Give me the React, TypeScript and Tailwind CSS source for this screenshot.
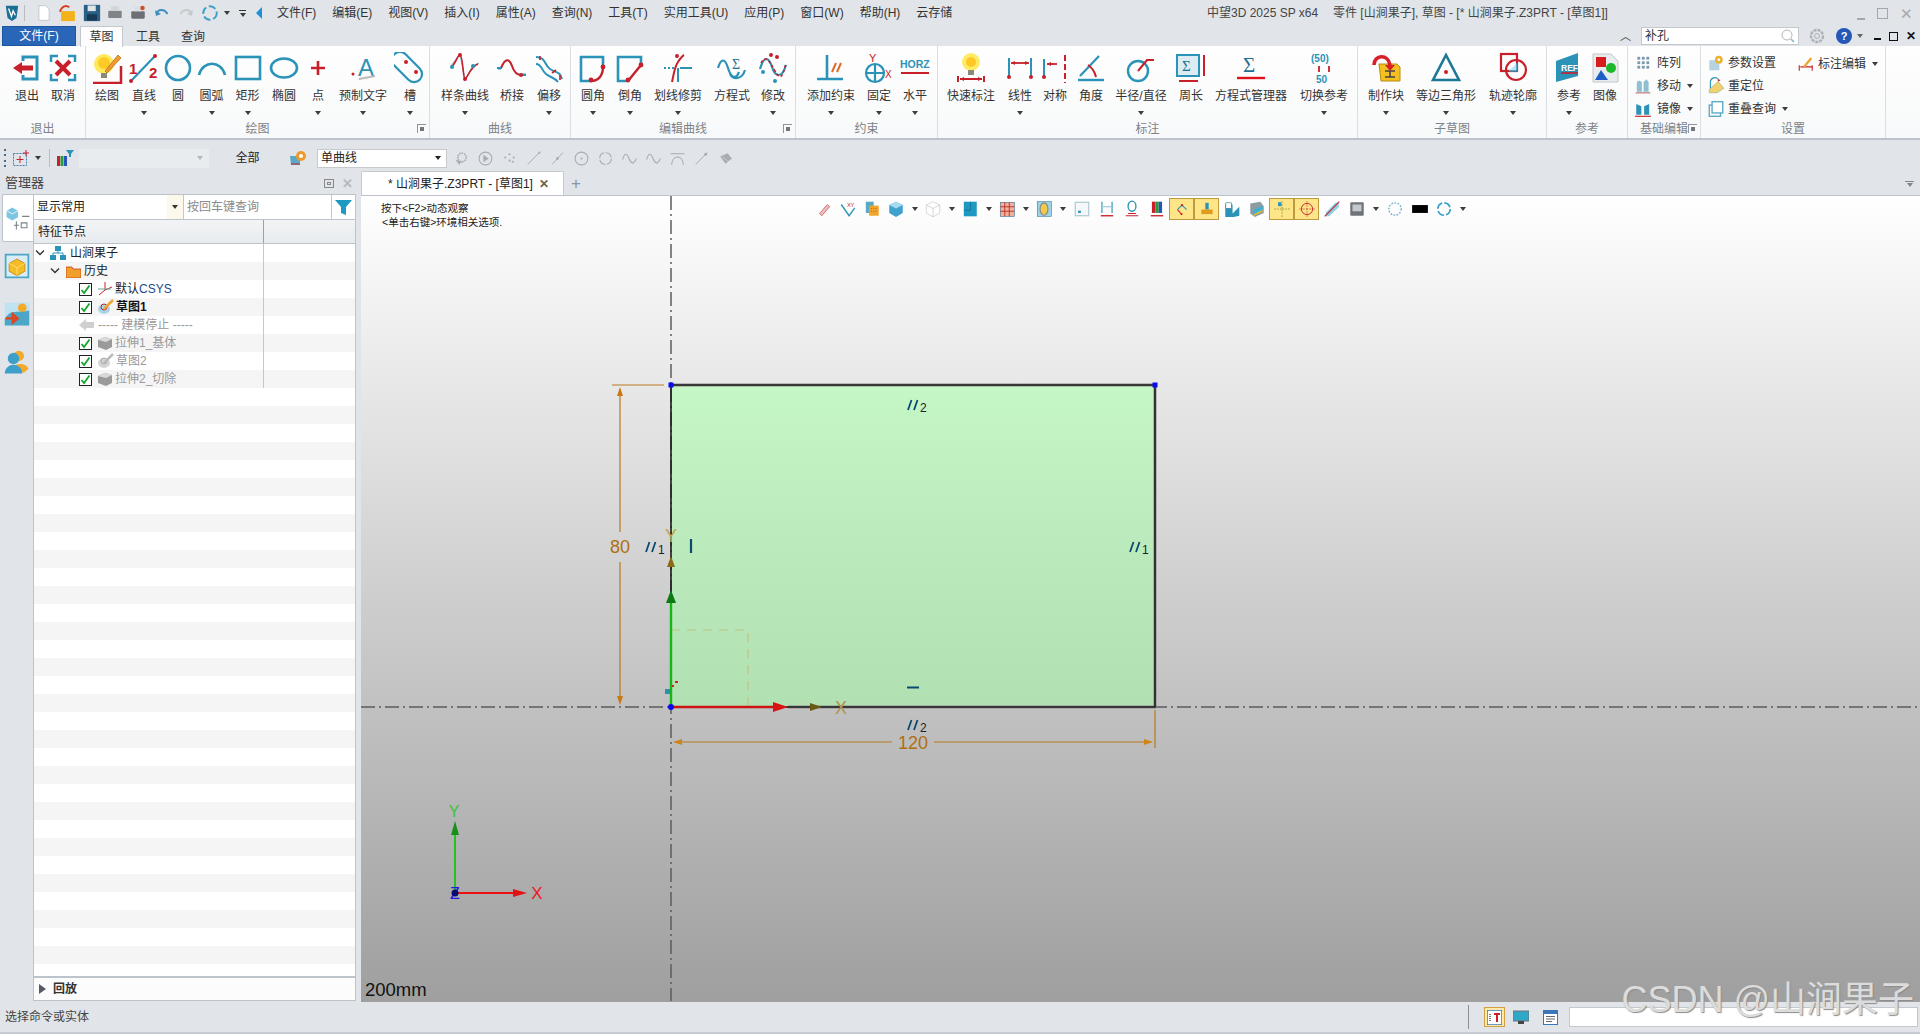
import type { ReactNode } from "react";

const T = "#2b93b8";
const R = "#c8202a";
const G = "#a9adb1";

function Svg({ size = 32, children }: { size?: number; children: ReactNode }) {
  return (
    <svg width={size} height={size} viewBox="0 0 32 32" fill="none" className="shrink-0">
      {children}
    </svg>
  );
}

const Dot = ({ x, y, c = R, r = 2 }: { x: number; y: number; c?: string; r?: number }) => <circle cx={x} cy={y} r={r} fill={c} />;

// ribbon icons, all on a 32 box
const icons: Record<string, ReactNode> = {
  exit: (<><path d="M12 9V5h14v22H12v-4" stroke={T} strokeWidth="3" /><path d="M2 16l9-6v3.5h11v5H11V22z" fill={R} /></>),
  cancel: (<><path d="M4 10V4h7M21 4h7v6M28 22v6h-7M11 28H4v-6" stroke={T} strokeWidth="2.5" /><path d="M9 9l14 14M23 9L9 23" stroke={R} strokeWidth="4" /></>),
  draw: (<><circle cx="13" cy="12" r="10" fill="#ffe95c" /><circle cx="13" cy="11" r="6" fill="#ffc928" /><rect x="10" y="21" width="6" height="5" fill="#8a8a7a" /><path d="M14 19L27 3l3 3-14 15z" fill="#ee9c2e" stroke="#a8651a" strokeWidth=".7" /><path d="M2 31h28V14" stroke={R} strokeWidth="2.5" /></>),
  line: (<><path d="M3 29L27 4" stroke={T} strokeWidth="2.2" /><Dot x={3} y={29} /><Dot x={27} y={4} /><text x="1" y="22" fontSize="15" fontWeight="700" fill={R} fontFamily="Liberation Sans">1</text><text x="21" y="26" fontSize="15" fontWeight="700" fill={R} fontFamily="Liberation Sans">2</text></>),
  circle: <circle cx="16" cy="16" r="12" stroke={T} strokeWidth="2.6" />,
  arc: <path d="M3 23C7 8 25 8 29 23" stroke={T} strokeWidth="2.6" />,
  rect: <rect x="4" y="5" width="24" height="22" stroke={T} strokeWidth="2.6" />,
  ellipse: <ellipse cx="16" cy="16" rx="13" ry="9.5" stroke={T} strokeWidth="2.6" />,
  point: <path d="M16 9v14M9 16h14" stroke={R} strokeWidth="2.6" />,
  preset: (<><text x="11" y="24" fontSize="24" fill={T} fontFamily="Liberation Sans">A</text><path d="M12 27l16-3" stroke="#bbb" strokeWidth="2" /><Dot x={6} y={22} r={1.5} /></>),
  slot: (<><rect x="-6" y="-8" width="36" height="16" rx="8" transform="translate(13 15) rotate(45) translate(-12 0)" stroke={T} strokeWidth="2.2" /><Dot x={12} y={10} r={2} /><Dot x={22} y={20} r={2} /></>),
  spline: (<><path d="M2 14L11 2l5 26 8-14 6-3" stroke="#8aaec0" strokeWidth="1.2" /><path d="M3 15C8 8 9 3 11 3c3 0 3 24 5 24s5-12 13-15" stroke={R} strokeWidth="1.6" /><Dot x={3} y={15} c={T} /><Dot x={11} y={3} /><Dot x={16} y={27} /><Dot x={24} y={14} c={T} /></>),
  bridge: (<><path d="M2 17h3C10 4 14 8 16 14s6 10 10 8h4" stroke={T} strokeWidth="1" /><path d="M5 16C10 4 14 8 16 14s5 9 9 9" stroke={R} strokeWidth="2" /><path d="M1 16h4M25 23h5" stroke={T} strokeWidth="2" /><Dot x={25} y={23} /></>),
  offset: (<><path d="M3 5c10 0 8 8 14 12s10 2 12 10" stroke={T} strokeWidth="2" /><path d="M3 12c6 0 5 6 10 10s8 3 12 8" stroke={T} strokeWidth="2" /><path d="M7 8v-4M19 21l4-3M27 28v-5" stroke={R} strokeWidth="1.6" /></>),
  fillet: (<><path d="M26 15V5H4v24h10" stroke={T} strokeWidth="2.6" /><path d="M14 29c7 0 12-5 12-14" stroke={R} strokeWidth="2.4" /><Dot x={26} y={15} r={2.4} /><Dot x={14} y={28} r={2.4} /></>),
  chamfer: (<><path d="M27 13V5H4v24h10" stroke={T} strokeWidth="2.6" /><path d="M14 29l13-16" stroke={R} strokeWidth="2.4" /><Dot x={27} y={13} r={2.4} /><Dot x={14} y={28} r={2.4} /></>),
  trim: (<><path d="M16 16v14M18 16h12" stroke={T} strokeWidth="2" /><path d="M2 16h10" stroke={T} strokeWidth="2" strokeDasharray="2 2" /><path d="M10 30c2-8 2-14 6-20s6-7 6-7" stroke={R} strokeWidth="2" /><Dot x={15} y={4} /></>),
  equation: (<><path d="M2 16C5 6 9 6 12 16s8 12 11 4" stroke={T} strokeWidth="2.2" /><path d="M14 22c3 6 12 6 15-4" stroke={T} strokeWidth="2.2" /><text x="16" y="17" fontSize="14" fill="#1f6f8f" fontFamily="Liberation Serif">Σ</text></>),
  modify: (<><path d="M3 17C7 3 12 5 15 15s10 12 14-2" stroke={T} strokeWidth="2.2" /><path d="M4 11C8 3 12 8 18 19s8 4 11-8" stroke={R} strokeWidth="1.5" strokeDasharray="3 2" /><Dot x={14} y={3} /><Dot x={20} y={5} /><Dot x={6} y={20} c={T} /><Dot x={18} y={29} c={T} /></>),
  constraint: (<><path d="M12 3v24M2 27h26" stroke={T} strokeWidth="2.6" /><path d="M17 20l4-9M22 20l4-9" stroke="#e06a2a" strokeWidth="2" /></>),
  fix: (<><circle cx="12" cy="21" r="9" stroke={T} strokeWidth="2.2" /><path d="M3 21h18M12 12v18" stroke={T} strokeWidth="2.2" /><text x="6" y="10" fontSize="11" fill={R} fontFamily="Liberation Sans">Y</text><text x="22" y="26" fontSize="10" fill={R} fontFamily="Liberation Sans">X</text></>),
  horz: (<><text x="1" y="16" fontSize="10.5" fontWeight="700" fill={T} fontFamily="Liberation Sans">HORZ</text><path d="M2 21h28" stroke={R} strokeWidth="2" /></>),
  quick: (<><circle cx="16" cy="10" r="9" fill="#ffeb63" /><circle cx="16" cy="10" r="5" fill="#ffc726" /><rect x="13" y="18" width="6" height="5" fill="#8a8a7a" /><path d="M3 24v6M29 24v6M5 27h22" stroke={R} strokeWidth="2" /><path d="M5 27l4-2v4zM27 27l-4-2v4z" fill={R} /></>),
  linear: (<><path d="M5 6v19M27 6v19" stroke={T} strokeWidth="2" /><path d="M7 11h18" stroke={R} strokeWidth="1.8" /><path d="M7 11l4-2v4zM25 11l-4-2v4z" fill={R} /><Dot x={5} y={25} /><Dot x={27} y={25} /></>),
  sym: (<><path d="M5 7v18" stroke={T} strokeWidth="2" /><path d="M8 12h10" stroke={R} strokeWidth="1.8" /><path d="M8 12l4-2v4z" fill={R} /><path d="M26 3v28" stroke={R} strokeWidth="2" strokeDasharray="6 3" /><Dot x={5} y={25} /></>),
  angle: (<><path d="M3 28h26" stroke={T} strokeWidth="2.4" /><path d="M5 24L24 4" stroke={T} strokeWidth="2.2" /><path d="M13 13c5 3 7 8 8 12" stroke={R} strokeWidth="2" /></>),
  radial: (<><circle cx="13" cy="19" r="10" stroke={T} strokeWidth="2.4" /><path d="M13 19l9-11h7" stroke={R} strokeWidth="2" /></>),
  perim: (<><rect x="2" y="3" width="22" height="21" fill="#dcecf3" stroke={T} strokeWidth="2" /><text x="7" y="19" fontSize="15" fill="#1f6f8f" fontFamily="Liberation Serif">Σ</text><path d="M29 3v21M4 29h19" stroke={R} strokeWidth="2" /></>),
  eqm: (<><text x="8" y="20" fontSize="21" fill="#1f6f8f" fontFamily="Liberation Serif">Σ</text><path d="M2 26h28" stroke="#e0101c" strokeWidth="2.4" /></>),
  refsw: (<><text x="3" y="10" fontSize="10" fontWeight="700" fill={T} fontFamily="Liberation Sans">(50)</text><path d="M11 14v6M21 20v-6" stroke={R} strokeWidth="1.8" /><text x="8" y="31" fontSize="10" fontWeight="700" fill={T} fontFamily="Liberation Sans">50</text></>),
  block: (<><path d="M9 12h18l3 3v14H11z" fill="#f4c020" stroke="#b98a10" /><path d="M15 19h10M20 19v6M15 25h10" stroke="#444" strokeWidth="1.6" /><path d="M4 13C4 3 18 1 20 13" stroke="#d8202a" strokeWidth="3.6" /><path d="M15 13h10l-5 6z" fill="#d8202a" /></>),
  tri: (<><path d="M16 3L29 28H3z" stroke="#1d7896" strokeWidth="2.6" /><Dot x={16} y={20} /></>),
  profile: (<><rect x="4" y="2" width="16" height="17" stroke={R} strokeWidth="2.2" /><circle cx="19" cy="18" r="10" stroke={R} strokeWidth="2.2" /><path d="M12 19h8v-8" fill="#bfe0ee" stroke={T} strokeWidth="1.4" /></>),
  ref: (<><path d="M3 9L25 1v23L3 30z" fill={T} /><text x="8" y="19" fontSize="8.5" fontWeight="700" fill="#fff" fontFamily="Liberation Sans">REF</text><path d="M8 21h17" stroke={R} strokeWidth="1.6" /></>),
  image: (<><path d="M4 2h18l7 7v21H4z" fill="#e9ecee" stroke="#c2c6ca" /><rect x="7" y="5" width="10" height="10" fill="#d81c1c" /><circle cx="22" cy="16" r="5" fill="#1cb82c" /><path d="M12 18l7 10H6z" fill="#1d5fc4" /></>),
  array: (<>{[5, 13, 21].flatMap((y) => [6, 14, 22].map((x) => <rect key={`${x}-${y}`} x={x} y={y} width="5" height="5" fill="#7b99ad" />))}</>),
  move: (<><path d="M9 6l5 3v17H5V9zM22 4l4 5v17h-9V9z" fill="#8fc0d2" /><path d="M3 28h26" stroke="#c99" strokeWidth="3" /></>),
  mirror: (<><path d="M4 7l9 4v15H4zM27 7l-9 4v15h9z" fill="#2b93b8" /><path d="M2 29h28" stroke={R} strokeWidth="2" /></>),
  param: (<><rect x="4" y="11" width="18" height="18" fill="#b7d3e2" /><circle cx="21" cy="10" r="7" fill="#eeb22e" /><circle cx="21" cy="10" r="2.5" fill="#fff" /></>),
  reloc: (<><path d="M4 22L20 8l10 12-12 8H4z" fill="#f3d070" stroke="#8a7" /><path d="M6 20V8a8 8 0 0 1 14-4" stroke={T} strokeWidth="2" /><path d="M20 3l4 3-5 2z" fill={R} /></>),
  overlap: (<><rect x="4" y="9" width="20" height="20" stroke="#5aa9c6" strokeWidth="2.4" /><rect x="9" y="3" width="19" height="20" fill="#fff" stroke="#5aa9c6" strokeWidth="2.4" /></>),
  annot: (<><path d="M4 28V18M27 28V18M6 21h20" stroke={R} strokeWidth="2" /><path d="M11 20L24 4l3 3-13 15z" fill="#eea22e" /></>),
};

const Caret = ({ c = "border-t-[#3c3c3c]" }: { c?: string }) => (
  <span className={`inline-block h-0 w-0 border-x-[3px] border-t-[4px] border-x-transparent ${c}`} />
);

type Btn = { k: string; t: string; w: string; drop?: boolean };
type Grp = { label: string; cls: string; launcher?: boolean; items: Btn[] };

const groups: Grp[] = [
  { label: "退出", cls: "w-[85px] pl-[9px]", items: [{ k: "exit", t: "退出", w: "w-[36px]" }, { k: "cancel", t: "取消", w: "w-[36px]" }] },
  {
    label: "绘图", cls: "w-[343px] pl-[2px]", launcher: true,
    items: [
      { k: "draw", t: "绘图", w: "w-[38px]" },
      { k: "line", t: "直线", w: "w-[36px]", drop: true },
      { k: "circle", t: "圆", w: "w-[32px]" },
      { k: "arc", t: "圆弧", w: "w-[35px]", drop: true },
      { k: "rect", t: "矩形", w: "w-[37px]", drop: true },
      { k: "ellipse", t: "椭圆", w: "w-[36px]" },
      { k: "point", t: "点", w: "w-[32px]", drop: true },
      { k: "preset", t: "预制文字", w: "w-[58px]", drop: true },
      { k: "slot", t: "槽", w: "w-[36px]", drop: true },
    ],
  },
  {
    label: "曲线", cls: "w-[140px] pl-[5px]",
    items: [
      { k: "spline", t: "样条曲线", w: "w-[60px]", drop: true },
      { k: "bridge", t: "桥接", w: "w-[34px]" },
      { k: "offset", t: "偏移", w: "w-[40px]", drop: true },
    ],
  },
  {
    label: "编辑曲线", cls: "w-[224px] pl-[4px]", launcher: true,
    items: [
      { k: "fillet", t: "圆角", w: "w-[36px]", drop: true },
      { k: "chamfer", t: "倒角", w: "w-[38px]", drop: true },
      { k: "trim", t: "划线修剪", w: "w-[58px]", drop: true },
      { k: "equation", t: "方程式", w: "w-[50px]" },
      { k: "modify", t: "修改", w: "w-[32px]", drop: true },
    ],
  },
  {
    label: "约束", cls: "w-[141px] pl-[5px]",
    items: [
      { k: "constraint", t: "添加约束", w: "w-[60px]", drop: true },
      { k: "fix", t: "固定", w: "w-[36px]", drop: true },
      { k: "horz", t: "水平", w: "w-[36px]", drop: true },
    ],
  },
  {
    label: "标注", cls: "w-[419px] pl-[3px]",
    items: [
      { k: "quick", t: "快速标注", w: "w-[60px]" },
      { k: "linear", t: "线性", w: "w-[38px]", drop: true },
      { k: "sym", t: "对称", w: "w-[32px]" },
      { k: "angle", t: "角度", w: "w-[40px]" },
      { k: "radial", t: "半径/直径", w: "w-[60px]", drop: true },
      { k: "perim", t: "周长", w: "w-[40px]" },
      { k: "eqm", t: "方程式管理器", w: "w-[80px]" },
      { k: "refsw", t: "切换参考", w: "w-[66px]", drop: true },
    ],
  },
  {
    label: "子草图", cls: "w-[188px] pl-[4px]",
    items: [
      { k: "block", t: "制作块", w: "w-[48px]", drop: true },
      { k: "tri", t: "等边三角形", w: "w-[72px]", drop: true },
      { k: "profile", t: "轨迹轮廓", w: "w-[62px]", drop: true },
    ],
  },
  {
    label: "参考", cls: "w-[80px] pl-[4px]",
    items: [
      { k: "ref", t: "参考", w: "w-[36px]", drop: true },
      { k: "image", t: "图像", w: "w-[36px]" },
    ],
  },
];

const Launcher = () => (
  <span className="absolute bottom-[5px] right-[3px] flex h-[9px] w-[9px] items-center justify-center border-l border-t border-[#8f959b]">
    <span className="h-[4px] w-[4px] bg-[#70767c]" />
  </span>
);

function RibbonButton({ b }: { b: Btn }) {
  return (
    <div className={`flex flex-col items-center ${b.w}`}>
      <div className="flex h-[34px] items-center justify-center">
        <Svg>{icons[b.k]}</Svg>
      </div>
      <span className="mt-[3px] h-[16px] whitespace-nowrap text-[12px] leading-[16px] text-[#333]">{b.t}</span>
      {b.drop && <span className="mt-[7px] flex"><Caret /></span>}
    </div>
  );
}

function SmallBtn({ k, t, drop, gap = "ml-[5px]" }: { k: string; t: string; drop?: boolean; gap?: string }) {
  return (
    <div className="flex h-[23px] items-center whitespace-nowrap text-[12px] text-[#333]">
      <Svg size={18}>{icons[k]}</Svg>
      <span className={gap}>{t}</span>
      {drop && <span className="ml-[6px] flex"><Caret /></span>}
    </div>
  );
}

function Ribbon() {
  const label = "flex h-[18px] items-center justify-center text-[12px] text-[#7c8288]";
  return (
    <div className="flex h-[94px] shrink-0 border-b-2 border-[#bcc3ca] bg-gradient-to-b from-[#fefefe] to-[#f8f9fa]">
      {groups.map((g) => (
        <div key={g.label} className="relative flex w-auto flex-col border-r border-[#dadde1]">
          <div className={`flex h-[74px] pt-[5px] ${g.cls}`}>
            {g.items.map((b) => <RibbonButton key={b.t} b={b} />)}
          </div>
          <div className={label}>{g.label}</div>
          {g.launcher && <Launcher />}
        </div>
      ))}
      <div className="relative flex w-[73px] flex-col border-r border-[#dadde1]">
        <div className="flex h-[74px] flex-col pl-[6px] pt-[6px]">
          <SmallBtn k="array" t="阵列" />
          <SmallBtn k="move" t="移动" drop />
          <SmallBtn k="mirror" t="镜像" drop />
        </div>
        <div className={label}>基础编辑</div>
        <Launcher />
      </div>
      <div className="flex w-[185px] flex-col border-r border-[#dadde1]">
        <div className="flex h-[74px] pl-[6px] pt-[6px]">
          <div className="flex w-[90px] flex-col">
            <SmallBtn k="param" t="参数设置" gap="ml-[3px]" />
            <SmallBtn k="reloc" t="重定位" gap="ml-[3px]" />
            <SmallBtn k="overlap" t="重叠查询" drop gap="ml-[3px]" />
          </div>
          <SmallBtn k="annot" t="标注编辑" drop gap="ml-[3px]" />
        </div>
        <div className={label}>设置</div>
      </div>
    </div>
  );
}

const menu = ["文件(F)", "编辑(E)", "视图(V)", "插入(I)", "属性(A)", "查询(N)", "工具(T)", "实用工具(U)", "应用(P)", "窗口(W)", "帮助(H)", "云存储"];

function TitleBar() {
  return (
    <div className="flex h-[26px] shrink-0 items-center text-[12px] text-[#333]">
      <div className="flex w-[277px] items-center pl-[3px]">
        <Svg size={18}><path d="M5 3h22l-3 22-8 5-8-5z" fill="#1c6f94" /><path d="M10 8l5 14 3-10 4 8" stroke="#fff" strokeWidth="2.4" /></Svg>
        <span className="ml-[3px] h-[16px] w-px bg-[#b8bcc0]" />
        <span className="ml-[10px]"><Svg size={18}><path d="M7 3h12l6 6v20H7z" fill="#fff" stroke="#a8acb0" /></Svg></span>
        <span className="ml-[5px]"><Svg size={20}><path d="M5 13h22v16H5z" fill="#f3b21c" /><path d="M3 14C6 4 14 3 18 7" stroke="#d8401c" strokeWidth="3" /></Svg></span>
        <span className="ml-[4px]"><Svg size={20}><path d="M3 3h26v26H3z" fill="#2a5f86" /><rect x="9" y="4" width="13" height="9" fill="#dfe6ea" /><rect x="8" y="18" width="16" height="10" fill="#173b55" /></Svg></span>
        <span className="ml-[4px]"><Svg size={18}><rect x="4" y="12" width="24" height="13" rx="2" fill="#808488" /><path d="M9 4h14v8H9z" fill="#d3d6d9" /></Svg></span>
        <span className="ml-[5px]"><Svg size={18}><rect x="4" y="13" width="24" height="13" rx="2" fill="#6c7074" /><path d="M9 4h13v9H9z" fill="#dcdfe2" /><circle cx="24" cy="7" r="4" fill="#c8522a" /></Svg></span>
        <span className="ml-[7px]"><Svg size={16}><path d="M5 18C8 8 20 7 27 18" stroke="#3b8fc0" strokeWidth="4" /><path d="M2 10l2 12 10-4z" fill="#3b8fc0" /></Svg></span>
        <span className="ml-[8px]"><Svg size={16}><path d="M27 18C24 8 12 7 5 18" stroke="#c6c9cc" strokeWidth="4" /><path d="M30 10l-2 12-10-4z" fill="#c6c9cc" /></Svg></span>
        <span className="ml-[7px]"><Svg size={18}><circle cx="16" cy="16" r="12" stroke="#3aa0c8" strokeWidth="3.4" strokeDasharray="13 5" /></Svg></span>
        <span className="ml-[5px] flex"><Caret /></span>
        <span className="ml-[9px] flex flex-col items-center gap-[2px]"><span className="h-[1px] w-[7px] bg-[#333]" /><Caret /></span>
        <span className="ml-[10px] h-0 w-0 border-y-[6px] border-r-[6px] border-y-transparent border-r-[#1f8fd8]" />
      </div>
      <div className="flex w-[930px] gap-[16px]">
        {menu.map((m) => <span key={m} className="whitespace-nowrap">{m}</span>)}
      </div>
      <span className="w-[126px] whitespace-nowrap text-[#444]">中望3D 2025 SP x64</span>
      <span className="whitespace-nowrap text-[#444]">零件 [山涧果子],  草图 - [* 山涧果子.Z3PRT - [草图1]]</span>
      <div className="ml-auto flex items-center gap-[12px] pr-[7px] text-[#a4a8ac]">
        <span className="mb-[1px] h-[2px] w-[8px] self-end bg-[#a4a8ac]" />
        <span className="h-[11px] w-[11px] border border-[#a4a8ac]" />
        <span className="text-[15px] leading-none">✕</span>
      </div>
    </div>
  );
}

function TabRow() {
  return (
    <div className="flex h-[20px] shrink-0 items-end text-[12px] text-[#333]">
      <div className="ml-[2px] flex h-[20px] w-[74px] items-center justify-center border border-[#1b57a0] bg-[#2a66b8] text-[#fff]">文件(F)</div>
      <div className="relative top-[1px] ml-[4px] flex h-[21px] w-[43px] items-center justify-center border border-b-0 border-[#c3c8cd] bg-[#fdfdfe]">草图</div>
      <span className="ml-[13px] h-[18px]">工具</span>
      <span className="ml-[21px] h-[18px]">查询</span>
      <div className="ml-auto flex h-[20px] items-center">
        <span className="mr-[10px] text-[11px] leading-none text-[#555]">︿</span>
        <div className="flex h-[18px] w-[158px] items-center justify-between border border-[#c3c8cd] bg-[#fff] px-[3px]">
          <span>补孔</span>
          <svg width="14" height="14" viewBox="0 0 14 14" fill="none"><circle cx="6" cy="6" r="5" stroke="#b4b8bc" /><path d="M10 10l3 3" stroke="#7fb2cc" strokeWidth="1.5" /></svg>
        </div>
        <span className="ml-[9px]">
          <svg width="18" height="18" viewBox="0 0 18 18" fill="none"><circle cx="9" cy="9" r="6" stroke="#aeb2b6" strokeWidth="2.4" strokeDasharray="3 1" /><circle cx="9" cy="9" r="2.5" stroke="#aeb2b6" /></svg>
        </span>
        <span className="ml-[10px] flex h-[16px] w-[16px] items-center justify-center rounded-full bg-[#2458b8] text-[11px] font-bold leading-none text-[#fff]">?</span>
        <span className="ml-[5px] flex"><Caret c="border-t-[#666]" /></span>
        <span className="ml-[11px] h-[2px] w-[7px] translate-y-[3px] self-center bg-[#111]" />
        <span className="ml-[8px] h-[9px] w-[9px] border-[1.5px] border-[#111]" />
        <span className="ml-[8px] mr-[4px] text-[12px] font-bold leading-none text-[#111]">✕</span>
      </div>
    </div>
  );
}

// grey toolbar icons
const greys: ReactNode[] = [
  <><circle cx="17" cy="14" r="8" stroke={G} strokeWidth="3" strokeDasharray="3 1.5" /><path d="M4 18l8 10 2-4 5-1z" fill={G} /></>,
  <><circle cx="16" cy="16" r="12" stroke={G} strokeWidth="2" /><path d="M12 9l10 7-10 7z" fill={G} /></>,
  <><Dot x={8} y={14} c={G} /><Dot x={16} y={8} c={G} /><Dot x={16} y={20} c={G} /><Dot x={24} y={14} c={G} /><Dot x={22} y={22} c={G} /></>,
  <><path d="M5 27L27 5" stroke={G} strokeWidth="1.8" /><Dot x={27} y={5} c={G} /></>,
  <><path d="M6 27L26 5" stroke={G} strokeWidth="1.8" /><Dot x={16} y={16} c={G} r={2.6} /></>,
  <><circle cx="16" cy="16" r="12" stroke={G} strokeWidth="2" /><Dot x={16} y={16} c={G} /></>,
  <circle cx="16" cy="16" r="11" stroke={G} strokeWidth="2" strokeDasharray="14 3" />,
  <path d="M3 18C7 4 11 6 15 16s9 12 14 0" stroke={G} strokeWidth="2" />,
  <path d="M3 18C7 4 11 6 15 16s9 12 14 0" stroke={G} strokeWidth="2" />,
  <><path d="M5 28C6 8 26 8 27 28" stroke={G} strokeWidth="2" /><path d="M3 7h26" stroke={G} strokeWidth="2" /></>,
  <><path d="M5 27L27 5" stroke={G} strokeWidth="1.8" /><Dot x={24} y={8} c={G} r={2.6} /></>,
  <><path d="M6 12l14-6 8 10-12 10z" fill={G} /><path d="M10 13l12 9" stroke="#e1e4e8" /></>,
];

function ToolRow() {
  return (
    <div className="flex h-[32px] shrink-0 items-center pt-[4px] text-[12px] text-[#222]">
      <span className="ml-[4px] flex h-[18px] flex-col justify-between">
        {[0, 1, 2, 3].map((i) => <span key={i} className="h-[2px] w-[2px] bg-[#4a6a8a]" />)}
      </span>
      <span className="ml-[6px]">
        <svg width="18" height="18" viewBox="0 0 18 18" fill="none"><rect x="1.5" y="4.5" width="13" height="12" stroke="#4a7ea8" strokeDasharray="2 1" /><path d="M8 7v7M4.5 10.5h7M14 1v6M11 4h6" stroke={R} /></svg>
      </span>
      <span className="ml-[5px] flex"><Caret /></span>
      <span className="ml-[8px] h-[18px] w-px bg-[#b8bcc0]" />
      <span className="ml-[6px]">
        <svg width="18" height="18" viewBox="0 0 18 18"><rect x="1" y="7" width="3" height="10" fill="#c8202a" /><rect x="4.5" y="7" width="3" height="10" fill="#2a9a3a" /><rect x="8" y="7" width="3" height="10" fill="#2458b8" /><path d="M10 1h8l-3 4v3l-2 0V5z" fill="#2b93b8" /></svg>
      </span>
      <div className="ml-[5px] flex h-[19px] w-[130px] items-center justify-end bg-[#e9ecef] pr-[6px]"><Caret c="border-t-[#b5b8bb]" /></div>
      <span className="ml-[24px] w-[29px] text-center">全部</span>
      <span className="ml-[27px]">
        <svg width="18" height="18" viewBox="0 0 18 18"><path d="M1 7h10v9H2z" fill="#5aa9c6" /><circle cx="12" cy="7" r="5" fill="#ee9a2a" /><circle cx="12" cy="7" r="2" fill="#fff" /><path d="M2 15h9" stroke={R} /></svg>
      </span>
      <div className="ml-[10px] flex h-[19px] w-[130px] items-center justify-between border border-[#c6cacf] bg-[#fff] pl-[3px] pr-[5px]">
        <span>单曲线</span>
        <Caret c="border-t-[#222]" />
      </div>
      <div className="ml-[2px] flex">
        {greys.map((g, i) => (
          <span key={i} className="flex w-[24px] justify-center"><Svg size={17}>{g}</Svg></span>
        ))}
      </div>
    </div>
  );
}

const Cube = ({ c = "#9a9a9a" }: { c?: string }) => (
  <svg width="16" height="16" viewBox="0 0 16 16" className="shrink-0"><path d="M1 5l7-3 7 2v8l-6 3-8-3z" fill={c} /><path d="M1 5l8 2 6-3-7-2z" fill="#d9d9d9" /></svg>
);
const Check = () => (
  <span className="flex h-[13px] w-[13px] shrink-0 items-center justify-center border border-[#222] bg-[#fff]">
    <svg width="11" height="11" viewBox="0 0 11 11" fill="none"><path d="M1.5 6l2.5 3 5.5-7.5" stroke="#12a52a" strokeWidth="1.8" /></svg>
  </span>
);
const SketchIco = ({ dim }: { dim?: boolean }) => (
  <svg width="18" height="16" viewBox="0 0 18 16" fill="none" className="shrink-0">
    <ellipse cx="7" cy="10" rx="6" ry="5" fill={dim ? "#d4d4d4" : "#a9d4ea"} />
    <circle cx="7" cy="8" r="3" stroke={dim ? "#aaa" : R} />
    <path d="M7 10L16 1" stroke={dim ? "#bbb" : "#eea72e"} strokeWidth="2.5" />
  </svg>
);
const Chevron = () => (
  <svg width="10" height="8" viewBox="0 0 10 8" fill="none" className="shrink-0"><path d="M1 1.5l4 4 4-4" stroke="#333" strokeWidth="1.4" /></svg>
);

type Row = { pad: string; node: ReactNode };
const rows: Row[] = [
  {
    pad: "pl-[1px]",
    node: (<><Chevron /><span className="ml-[5px]"><svg width="16" height="14" viewBox="0 0 16 14"><rect x="5" y="0" width="6" height="5" fill="#2b93b8" /><rect x="0" y="9" width="6" height="5" fill="#2b93b8" /><rect x="10" y="9" width="6" height="5" fill="#2b93b8" /><path d="M3 9V7h10v2M8 5v2" stroke="#2b93b8" fill="none" /></svg></span><span className="ml-[4px] text-[#222]">山涧果子</span></>),
  },
  {
    pad: "pl-[16px]",
    node: (<><Chevron /><span className="ml-[6px]"><svg width="15" height="13" viewBox="0 0 15 13"><path d="M0 2h6l1 2h8v9H0z" fill="#f0a02a" stroke="#c8401c" strokeWidth=".8" /></svg></span><span className="ml-[3px] text-[#222]">历史</span></>),
  },
  {
    pad: "pl-[45px]",
    node: (<><Check /><span className="ml-[5px]"><svg width="16" height="16" viewBox="0 0 16 16" fill="none"><path d="M8 1v8M8 9l7-3M8 9l-6 5" stroke={R} /><path d="M1 8h13" stroke="#6a9" /></svg></span><span className="ml-[2px] text-[#222]">默认<span className="text-[#1a4a8a]">CSYS</span></span></>),
  },
  { pad: "pl-[45px]", node: (<><Check /><span className="ml-[5px]"><SketchIco /></span><span className="ml-[1px] font-bold text-[#111]">草图1</span></>) },
  {
    pad: "pl-[45px]",
    node: (<><svg width="15" height="12" viewBox="0 0 15 12" className="shrink-0"><path d="M0 6l7-6v3h8v6H7v3z" fill="#cfcfcf" /></svg><span className="ml-[4px] whitespace-nowrap text-[#9a9a9a]">----- 建模停止 -----</span></>),
  },
  { pad: "pl-[45px]", node: (<><Check /><span className="ml-[5px]"><Cube /></span><span className="ml-[2px] text-[#9a9a9a]">拉伸1_基体</span></>) },
  { pad: "pl-[45px]", node: (<><Check /><span className="ml-[5px]"><SketchIco dim /></span><span className="ml-[1px] text-[#9a9a9a]">草图2</span></>) },
  { pad: "pl-[45px]", node: (<><Check /><span className="ml-[5px]"><Cube /></span><span className="ml-[2px] text-[#9a9a9a]">拉伸2_切除</span></>) },
];

function LeftPanel() {
  return (
    <div className="flex w-[361px] shrink-0 flex-col pb-[1px] pr-[5px]">
      <div className="flex h-[22px] items-center pl-[5px] pr-[3px] text-[12px] text-[#444]">
        <span className="text-[13px]">管理器</span>
        <span className="ml-auto flex h-[9px] w-[10px] items-center justify-center border border-[#888]"><span className="h-[3px] w-[4px] border border-[#888]" /></span>
        <span className="ml-[8px] text-[13px] font-bold leading-none text-[#b6babe]">✕</span>
      </div>
      <div className="flex min-h-0 flex-1">
        <div className="flex w-[33px] shrink-0 flex-col items-center">
          <div className="ml-[2px] flex h-[48px] w-[31px] items-center justify-center rounded-l-[2px] border border-r-0 border-[#bcc3ca] bg-[#fff]">
            <Svg size={26}><path d="M2 7l7-4 7 4v8l-7 4-7-4z" fill="#7cc6e4" /><path d="M2 7l7 4 7-4" stroke="#fff" /><path d="M21 14h9M11 25h6M20 22h7v6h-7zM14 20v10" stroke="#7a8288" strokeWidth="1.3" /></Svg>
          </div>
          <div className="mt-[10px]"><Svg size={28}><rect x="3" y="3" width="26" height="26" fill="#d8eef7" stroke="#4ba6c8" strokeWidth="2" /><path d="M7 13l9-5 9 5v9l-9 5-9-5z" fill="#f5bc26" stroke="#c88a14" /><path d="M7 13l9 5 9-5M16 18v9" stroke="#ffe07a" /></Svg></div>
          <div className="mt-[20px]"><Svg size={28}><rect x="2" y="3" width="28" height="26" fill="#bfe3f1" /><circle cx="22" cy="9" r="5" fill="#f3a92a" /><path d="M2 22C9 9 16 16 30 12v17H2z" fill="#4ba6c8" /><path d="M3 21h12M11 16l6 5-6 5z" stroke="#e0441c" strokeWidth="2.4" /></Svg></div>
          <div className="mt-[20px]"><Svg size={28}><circle cx="18" cy="9" r="6" fill="#f3a92a" /><path d="M9 28c0-12 18-12 20-4l-5 4z" fill="#f3a92a" /><circle cx="12" cy="12" r="6.5" fill="#3d9fca" /><path d="M2 29c1-13 19-13 20 0z" fill="#3d9fca" /></Svg></div>
        </div>
        <div className="flex min-w-0 flex-1 flex-col border border-[#bcc3ca]">
          <div className="flex h-[24px] shrink-0 bg-[#fff] text-[12px]">
            <div className="flex w-[149px] items-center justify-between pl-[3px] text-[#222]">
              <span>显示常用</span>
              <span className="flex h-full w-[16px] items-center justify-center bg-[#fdf8ec]"><Caret c="border-t-[#333]" /></span>
            </div>
            <div className="flex w-[148px] items-center border-l border-[#c3c8cd] pl-[3px] text-[#8a8a8a]">按回车键查询</div>
            <div className="flex flex-1 items-center justify-center border-l border-[#c3c8cd]">
              <svg width="17" height="17" viewBox="0 0 17 17"><path d="M0 1h17l-6 7v8l-5-2V8z" fill="#1e9ac2" /></svg>
            </div>
          </div>
          <div className="flex h-[25px] shrink-0 border-y border-[#bcc3ca] bg-gradient-to-b from-[#f2f4f6] to-[#e8ebee] text-[12px] text-[#222]">
            <div className="flex w-[230px] items-center border-r border-[#9aa2a9] pl-[4px]">特征节点</div>
          </div>
          <div className="min-h-0 flex-1 overflow-hidden bg-[#fff]">
            {rows.map((r, i) => (
              <div key={i} className={`flex h-[18px] text-[12px] ${i % 2 ? "bg-[#f5f5f5]" : "bg-[#fff]"}`}>
                <div className={`flex w-[230px] items-center border-r border-[#c3c8cd] ${r.pad}`}>{r.node}</div>
              </div>
            ))}
            {Array.from({ length: 34 }, (_, i) => (
              <div key={i} className={`h-[18px] ${i % 2 ? "bg-[#f5f5f5]" : "bg-[#fff]"}`} />
            ))}
          </div>
          <div className="flex h-[24px] shrink-0 items-center border-t-2 border-[#bcc3ca] bg-[#fcfcfc] pl-[5px] text-[12px] font-bold text-[#333]">
            <span className="h-0 w-0 border-y-[5px] border-l-[7px] border-y-transparent border-l-[#555a66]" />
            <span className="ml-[7px]">回放</span>
          </div>
        </div>
      </div>
    </div>
  );
}

// icons of the floating bar in the sketch window
type VItem = { w: string; drop?: boolean; hi?: boolean; n: ReactNode };
const viewBar: VItem[] = [
  { w: "w-[24px]", n: <path d="M8 24l14-16 4 4-14 16z" fill="#e8c0c0" stroke={R} /> },
  { w: "w-[24px]", n: <><path d="M4 8l14 20L28 14" stroke={T} strokeWidth="2.4" /><text x="14" y="12" fontSize="10" fill={R} fontFamily="Liberation Sans">XY</text></> },
  { w: "w-[24px]", n: <><rect x="5" y="3" width="14" height="20" fill="#5aa9c6" /><rect x="11" y="10" width="17" height="18" fill="#f0a62a" /><path d="M14 15h11M14 20h11" stroke={R} strokeDasharray="2 2" /></> },
  { w: "w-[24px]", drop: true, n: <><path d="M4 9l12-6 12 6v14l-12 7-12-7z" fill="#3ea2cc" /><path d="M4 9l12 6 12-6-12-6z" fill="#a7dcf0" /></> },
  { w: "w-[24px]", drop: true, n: <path d="M4 9l12-6 12 6v14l-12 7-12-7zM4 9l12 6 12-6M16 15v15" stroke="#b4bcc2" fill="#fff" /> },
  { w: "w-[24px]", drop: true, n: <><rect x="5" y="3" width="23" height="26" fill="#1e9ac2" /><path d="M17 3v15H5" stroke="#0c5b78" /></> },
  { w: "w-[24px]", drop: true, n: <><rect x="4" y="4" width="25" height="25" fill="#f0b0a0" stroke="#2a6a8a" /><path d="M4 12h25M4 20h25M12 4v25M20 4v25" stroke="#b8301c" strokeWidth="1.6" /></> },
  { w: "w-[24px]", drop: true, n: <><rect x="4" y="3" width="25" height="26" fill="#9cd3e6" stroke="#2a7a9a" /><ellipse cx="16" cy="16" rx="7" ry="11" fill="#f3c94a" stroke="#888" strokeWidth="2" /></> },
  { w: "w-[25px]", n: <><rect x="4" y="4" width="24" height="24" fill="#f4f8fa" stroke="#a8c4d2" strokeWidth="2" /><rect x="9" y="19" width="5" height="4" fill="#2b93b8" /></> },
  { w: "w-[25px]", n: <><path d="M7 3v20M25 3v20" stroke={T} strokeWidth="2" /><path d="M9 12h14" stroke={T} /><path d="M5 28h22" stroke={R} strokeWidth="2.4" /></> },
  { w: "w-[25px]", n: <><ellipse cx="16" cy="11" rx="7" ry="9" stroke={T} strokeWidth="2.4" /><path d="M9 24h14M5 28h22" stroke={R} strokeWidth="2" /></> },
  { w: "w-[25px]", n: <><rect x="7" y="3" width="6" height="20" fill="#c8202a" /><rect x="13" y="3" width="6" height="20" fill="#2a9a3a" /><rect x="19" y="3" width="6" height="20" fill="#2458b8" /><path d="M5 28h22" stroke={R} strokeWidth="2.4" /></> },
  { w: "w-[25px]", hi: true, n: <><path d="M8 17l8-8 8 8" stroke={T} strokeWidth="2" /><path d="M8 17l6 7" stroke={R} strokeWidth="2" /><Dot x={16} y={9} /><Dot x={15} y={25} /></> },
  { w: "w-[25px]", hi: true, n: <><rect x="13" y="5" width="6" height="12" fill="#2b93b8" /><rect x="6" y="17" width="20" height="8" fill="#e09a1c" /></> },
  { w: "w-[25px]", n: <><path d="M4 8h13v16l12-12v16l-10 2H4z" fill="#2b93b8" /><rect x="5" y="5" width="10" height="10" fill="#fff" stroke="#1d6f8f" /></> },
  { w: "w-[25px]", n: <><path d="M4 6l18-3 6 8v12L12 30 4 24z" fill="#8f9ba3" /><path d="M8 18l18-8v8l-14 8z" fill="#3fb0d0" /><path d="M10 27l16-8" stroke="#e8c020" strokeWidth="2.4" /></> },
  { w: "w-[25px]", hi: true, n: <><path d="M16 2v28M2 16h28" stroke="#a8a840" strokeDasharray="3 2" strokeWidth="2" /><rect x="9" y="4" width="6" height="7" fill="#2b93b8" /></> },
  { w: "w-[25px]", hi: true, n: <><circle cx="16" cy="16" r="10" stroke={R} strokeWidth="1.6" /><path d="M16 2v28M2 16h28" stroke={R} strokeDasharray="4 2" /></> },
  { w: "w-[26px]", n: <><path d="M5 22L22 5h6v8L11 29H5z" fill="#8fd0e6" /><path d="M3 29L29 3" stroke={R} strokeWidth="2" /></> },
  { w: "w-[24px]", drop: true, n: <><rect x="4" y="4" width="24" height="24" rx="2" fill="#6f7478" /><rect x="8" y="8" width="16" height="12" fill="#c3c9ce" /></> },
  { w: "w-[25px]", n: <circle cx="16" cy="16" r="11" stroke="#6fb0c8" strokeWidth="2.4" strokeDasharray="3 2.5" /> },
  { w: "w-[25px]", n: <rect x="2" y="9" width="28" height="14" fill="#000" /> },
  { w: "w-[24px]", drop: true, n: <circle cx="16" cy="16" r="11" stroke="#3aa0c8" strokeWidth="3" strokeDasharray="13 4" /> },
];

const Par = ({ x, y, n }: { x: number; y: number; n: number }) => (
  <g>
    <path d={`M${x} ${y + 5}l3.5-10M${x + 6} ${y + 5}l3.5-10`} stroke="#0b4a6e" strokeWidth="1.8" />
    <text x={x + 12} y={y + 7} fontSize="12" fill="#222" fontFamily="Liberation Sans">{n}</text>
  </g>
);

function SketchCanvas() {
  const dim = "#b9791f";
  const txt = "#b06f10";
  return (
    <svg width="1559" height="805" viewBox="361 196 1559 805" fill="none" className="absolute left-0 top-0">
      <defs>
        <linearGradient id="skfill" x1="0" y1="0" x2="0" y2="1">
          <stop offset="0" stopColor="#c5f6c6" />
          <stop offset="1" stopColor="#b1e0b3" />
        </linearGradient>
      </defs>
      <rect x="671" y="385" width="484" height="322" fill="url(#skfill)" />
      <path d="M671 630h77v77" stroke="#c4c47c" strokeWidth="1.2" strokeDasharray="9 7" />
      <path d="M671 196V1001" stroke="#5c5c5c" strokeWidth="1.5" strokeDasharray="14 4 2 4" />
      <path d="M361 707H1920" stroke="#5c5c5c" strokeWidth="1.5" strokeDasharray="14 4 2 4" />
      <path d="M671 385H1155V707H788" stroke="#8a8a8a" strokeWidth="3" />
      <path d="M671 385H1155V707H671Z" stroke="#1c1c1c" strokeWidth="1.6" />
      {/* dimensions */}
      <path d="M612 385H664M620 390V532M620 562V702" stroke={dim} strokeWidth="1.2" />
      <path d="M620 387l-3 9h6zM620 705l-3-9h6z" fill="#c87a10" />
      <text x="620" y="553" textAnchor="middle" fontSize="18" fill={txt} fontFamily="Liberation Sans">80</text>
      <path d="M1155 710V748M675 742H892M934 742H1151" stroke={dim} strokeWidth="1.2" />
      <path d="M673 742l9-3v6zM1153 742l-9-3v6z" fill="#d08418" />
      <text x="913" y="749" textAnchor="middle" fontSize="18" fill={txt} fontFamily="Liberation Sans">120</text>
      {/* constraints */}
      <Par x={908} y={405} n={2} />
      <Par x={646} y={547} n={1} />
      <Par x={1130} y={547} n={1} />
      <Par x={908} y={725} n={2} />
      <path d="M691 539v14" stroke="#0b4a6e" strokeWidth="2.2" />
      <path d="M907 687.500h12" stroke="#0b4a6e" strokeWidth="2" />
      {/* sketch axes */}
      <path d="M671 707V600" stroke="#14b814" strokeWidth="2.4" />
      <path d="M671 590l-5 13h10z" fill="#0c7a12" />
      <path d="M671 556l-4 11h8z" fill="#8a6a14" />
      <text x="671" y="542" textAnchor="middle" fontSize="18" fill="#bfa24e" fontFamily="Liberation Sans">Y</text>
      <path d="M671 707H775" stroke="#cc1414" strokeWidth="2.6" />
      <path d="M788 707l-15-5v10z" fill="#d81414" />
      <path d="M822 707l-12-4v8z" fill="#6a5a14" />
      <text x="841" y="714" textAnchor="middle" fontSize="18" fill="#b0934a" fontFamily="Liberation Sans">X</text>
      <rect x="665" y="689" width="5" height="5" fill="#2f8fa8" />
      <rect x="675" y="681" width="3" height="2" fill="#d82020" />
      <rect x="672" y="685" width="2" height="2" fill="#d82020" />
      <rect x="668.500" y="382.500" width="5" height="5" fill="#0a0aee" />
      <rect x="1152.500" y="382.500" width="5" height="5" fill="#0a0aee" />
      <circle cx="671" cy="707" r="3" fill="#0a0aee" />
      {/* triad */}
      <path d="M455 893V835" stroke="#22c422" strokeWidth="2" />
      <path d="M455 821l-4 14h8z" fill="#16901a" />
      <text x="454" y="817" textAnchor="middle" fontSize="16" fill="#3ec23e" fontFamily="Liberation Sans">Y</text>
      <path d="M455 893H514" stroke="#ee1010" strokeWidth="2" />
      <path d="M527 893l-14-4v8z" fill="#e01414" />
      <text x="537" y="899" textAnchor="middle" fontSize="17" fill="#ee1818" fontFamily="Liberation Sans">X</text>
      <text x="455" y="899" textAnchor="middle" fontSize="16" fill="#1a1ae0" fontFamily="Liberation Sans">Z</text>
      <circle cx="455" cy="893" r="3.500" fill="#0a0a70" />
    </svg>
  );
}

function Viewport() {
  return (
    <div className="relative min-h-0 flex-1 overflow-hidden bg-gradient-to-b from-[#ffffff] to-[#9f9f9f]">
      <SketchCanvas />
      <div className="absolute left-[20px] top-[5px] text-[10.500px] leading-[14px] text-[#222]">
        <div>按下&lt;F2&gt;动态观察</div>
        <div className="pl-[1px]">&lt;单击右键&gt;环境相关选项.</div>
      </div>
      <div className="absolute left-[451px] top-[1px] flex h-[24px] items-center">
        {viewBar.map((it, i) => (
          <div key={i} className="flex items-center">
            <span className={`flex h-[22px] items-center justify-center ${it.w} ${it.hi ? "border border-[#c09a3e] bg-[#fde588]" : ""}`}>
              <Svg size={18}>{it.n}</Svg>
            </span>
            {it.drop && <span className="flex w-[13px] justify-center"><Caret /></span>}
          </div>
        ))}
      </div>
      <span className="absolute bottom-[1px] left-[4px] text-[18.500px] leading-[22px] text-[#111]">200mm</span>
    </div>
  );
}

function StatusBar() {
  return (
    <div className="flex h-[32px] shrink-0 items-center border-b-2 border-[#c6ccd2] text-[12px] text-[#444]">
      <span className="ml-[5px]">选择命令或实体</span>
      <span className="ml-auto h-[24px] w-px bg-[#8a8f94]" />
      <span className="ml-[15px] flex h-[20px] w-[21px] items-center justify-center border border-[#d2a040] bg-[#fde9a8]">
        <svg width="15" height="15" viewBox="0 0 15 15"><rect x="0" y="0" width="15" height="15" fill="#fff" stroke="#3a76b8" strokeWidth="1.5" /><path d="M7 4h6M10 4v8" stroke={R} strokeWidth="2" /><path d="M3 4v8" stroke="#555" strokeDasharray="1 1" strokeWidth="1.5" /></svg>
      </span>
      <span className="ml-[8px]">
        <svg width="16" height="15" viewBox="0 0 16 15"><rect x="0" y="1" width="16" height="10" fill="#2fa8c8" stroke="#707478" /><rect x="5" y="11" width="6" height="3" fill="#444" /></svg>
      </span>
      <span className="ml-[14px]">
        <svg width="15" height="15" viewBox="0 0 15 15" fill="none"><rect x=".5" y=".5" width="14" height="14" fill="#fff" stroke="#3a76b8" /><rect x="1" y="1" width="13" height="3" fill="#3a76b8" /><path d="M3 6.500h9M3 9h9M3 11.500h6" stroke="#666" /></svg>
      </span>
      <div className="ml-[11px] mr-[2px] h-[20px] w-[349px] border border-[#c3c8cd] bg-[#fff]" />
    </div>
  );
}

export default function App() {
  return (
    <div className="relative flex h-[1034px] w-[1920px] flex-col overflow-hidden bg-[#e1e4e8] font-['Liberation_Sans','Noto_Sans_CJK_SC',sans-serif]">
      <TitleBar />
      <TabRow />
      <Ribbon />
      <ToolRow />
      <div className="flex min-h-0 flex-1">
        <LeftPanel />
        <div className="flex min-w-0 flex-1 flex-col">
          <div className="flex h-[24px] shrink-0 items-end border-b border-[#bcc3ca]">
            <div className="flex h-[24px] w-[203px] items-center justify-center rounded-t-[2px] border border-b-0 border-[#c6cacf] bg-[#fff] pl-[12px] text-[12px] text-[#222]">
              <span>* 山涧果子.Z3PRT - [草图1]</span>
              <span className="ml-[6px] text-[12px] font-bold leading-none text-[#6f6243]">✕</span>
            </div>
            <span className="ml-[7px] self-center text-[17px] leading-none text-[#8f959b]">+</span>
            <span className="ml-auto mr-[6px] flex flex-col items-center gap-[1px] self-center">
              <span className="h-px w-[9px] bg-[#80868c]" />
              <Caret c="border-t-[#80868c]" />
            </span>
          </div>
          <Viewport />
        </div>
      </div>
      <StatusBar />
      <div className="pointer-events-none absolute bottom-[16px] right-[6px] text-[36px] leading-none text-[#dcdcdc] [text-shadow:1px_1px_1px_#8c8c8c]">CSDN @山涧果子</div>
    </div>
  );
}
